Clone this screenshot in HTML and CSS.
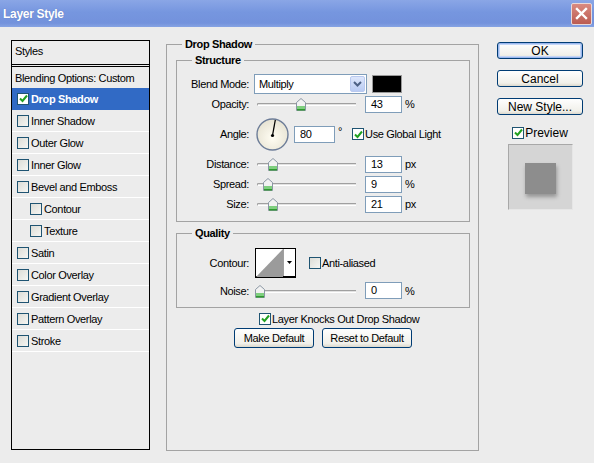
FILE: index.html
```html
<!DOCTYPE html>
<html>
<head>
  <title>Layer Style</title>
  <meta name="viewport" content="width=device-width, initial-scale=1">
  <link rel="stylesheet" href="styles.css">
</head>
<body>
  <div class="titlebar">
    <span class="title">Layer Style</span>
    <span class="close"><svg width="13" height="13" viewBox="0 0 13 13"><path d="M2 2 L11 11 M11 2 L2 11" stroke="#fff" stroke-width="2.4" stroke-linecap="square"/></svg></span>
  </div>

  <div class="main">
    <div class="styles-list">
      <div class="list-head">Styles</div>
      <div class="list-row plain">Blending Options: Custom</div>
      <div class="list-row selected"><span class="cb on"><svg width="9" height="9" viewBox="0 0 9 9"><path d="M1 4.5 L3.5 7 L8 1.5" stroke="#21a121" stroke-width="2" fill="none"/></svg></span>Drop Shadow</div>
      <div class="list-row"><span class="cb"></span>Inner Shadow</div>
      <div class="list-row"><span class="cb"></span>Outer Glow</div>
      <div class="list-row"><span class="cb"></span>Inner Glow</div>
      <div class="list-row"><span class="cb"></span>Bevel and Emboss</div>
      <div class="list-row sub"><span class="cb"></span>Contour</div>
      <div class="list-row sub"><span class="cb"></span>Texture</div>
      <div class="list-row"><span class="cb"></span>Satin</div>
      <div class="list-row"><span class="cb"></span>Color Overlay</div>
      <div class="list-row"><span class="cb"></span>Gradient Overlay</div>
      <div class="list-row"><span class="cb"></span>Pattern Overlay</div>
      <div class="list-row"><span class="cb"></span>Stroke</div>
    </div>

    <fieldset class="group outer">
      <legend>Drop Shadow</legend>

      <fieldset class="group structure">
        <legend>Structure</legend>
        <div class="row r-blend">
          <span class="lbl">Blend Mode:</span>
          <div class="select">Multiply<span class="sel-btn"><svg width="9" height="6" viewBox="0 0 9 6"><path d="M1 1 L4.5 4.5 L8 1" stroke="#4d6185" stroke-width="2" fill="none"/></svg></span></div>
          <span class="swatch"></span>
        </div>
        <div class="row r-slide r-opacity">
          <span class="lbl">Opacity:</span>
          <div class="slider"><span class="track"></span><svg class="thumb" style="left:42px" width="10" height="13" viewBox="0 0 10 13"><path d="M0.5 4.5 L5 0.5 L9.5 4.5 V12.5 H0.5 Z" fill="#f2f2f2" stroke="#8a96a3"/><rect x="1" y="8" width="8" height="4" fill="#7fcf7f"/><rect x="1" y="11" width="8" height="1.5" fill="#2e9a2e"/></svg></div>
          <span class="num">43</span><span class="unit">%</span>
        </div>
        <div class="row r-angle">
          <span class="lbl">Angle:</span>
          <svg class="dial" width="33" height="33" viewBox="0 0 33 33"><defs><radialGradient id="dg" cx="50%" cy="60%" r="60%"><stop offset="0" stop-color="#fffdf3"/><stop offset="1" stop-color="#e6e2d2"/></radialGradient></defs><circle cx="16.5" cy="16.5" r="15.5" fill="url(#dg)" stroke="#6d7d98" stroke-width="1.4"/><line x1="16.5" y1="17.5" x2="19.3" y2="2" stroke="#000" stroke-width="1.3"/><circle cx="16.5" cy="17.5" r="1.6" fill="#000"/></svg>
          <span class="num wide">80</span><span class="deg">°</span>
          <span class="check-item glob"><span class="cb on"><svg width="9" height="9" viewBox="0 0 9 9"><path d="M1 4.5 L3.5 7 L8 1.5" stroke="#21a121" stroke-width="2" fill="none"/></svg></span>Use Global Light</span>
        </div>
        <div class="row r-slide r-distance">
          <span class="lbl">Distance:</span>
          <div class="slider"><span class="track"></span><svg class="thumb" style="left:14px" width="10" height="13" viewBox="0 0 10 13"><path d="M0.5 4.5 L5 0.5 L9.5 4.5 V12.5 H0.5 Z" fill="#f2f2f2" stroke="#8a96a3"/><rect x="1" y="8" width="8" height="4" fill="#7fcf7f"/><rect x="1" y="11" width="8" height="1.5" fill="#2e9a2e"/></svg></div>
          <span class="num">13</span><span class="unit">px</span>
        </div>
        <div class="row r-slide r-spread">
          <span class="lbl">Spread:</span>
          <div class="slider"><span class="track"></span><svg class="thumb" style="left:9px" width="10" height="13" viewBox="0 0 10 13"><path d="M0.5 4.5 L5 0.5 L9.5 4.5 V12.5 H0.5 Z" fill="#f2f2f2" stroke="#8a96a3"/><rect x="1" y="8" width="8" height="4" fill="#7fcf7f"/><rect x="1" y="11" width="8" height="1.5" fill="#2e9a2e"/></svg></div>
          <span class="num">9</span><span class="unit">%</span>
        </div>
        <div class="row r-slide">
          <span class="lbl">Size:</span>
          <div class="slider"><span class="track"></span><svg class="thumb" style="left:14px" width="10" height="13" viewBox="0 0 10 13"><path d="M0.5 4.5 L5 0.5 L9.5 4.5 V12.5 H0.5 Z" fill="#f2f2f2" stroke="#8a96a3"/><rect x="1" y="8" width="8" height="4" fill="#7fcf7f"/><rect x="1" y="11" width="8" height="1.5" fill="#2e9a2e"/></svg></div>
          <span class="num">21</span><span class="unit">px</span>
        </div>
      </fieldset>

      <fieldset class="group quality">
        <legend>Quality</legend>
        <div class="row r-contour">
          <span class="lbl">Contour:</span>
          <div class="contour">
            <svg class="curve" width="27" height="28" viewBox="0 0 27 28"><polygon points="0,28 27,0 27,28" fill="#9b9b9b"/></svg>
            <span class="ct-btn"><svg width="5" height="3" viewBox="0 0 5 3"><polygon points="0,0 5,0 2.5,3" fill="#000"/></svg></span>
          </div>
          <span class="check-item aa"><span class="cb"></span>Anti-aliased</span>
        </div>
        <div class="row r-slide r-noise">
          <span class="lbl">Noise:</span>
          <div class="slider"><span class="track"></span><svg class="thumb" style="left:1px" width="10" height="13" viewBox="0 0 10 13"><path d="M0.5 4.5 L5 0.5 L9.5 4.5 V12.5 H0.5 Z" fill="#f2f2f2" stroke="#8a96a3"/><rect x="1" y="8" width="8" height="4" fill="#7fcf7f"/><rect x="1" y="11" width="8" height="1.5" fill="#2e9a2e"/></svg></div>
          <span class="num">0</span><span class="unit">%</span>
        </div>
      </fieldset>

      <div class="knock"><span class="check-item"><span class="cb on"><svg width="9" height="9" viewBox="0 0 9 9"><path d="M1 4.5 L3.5 7 L8 1.5" stroke="#21a121" stroke-width="2" fill="none"/></svg></span>Layer Knocks Out Drop Shadow</span></div>
      <div class="defaults">
        <span class="btn b-make">Make Default</span>
        <span class="btn b-reset">Reset to Default</span>
      </div>
    </fieldset>

    <div class="side">
      <span class="btn side-btn default">OK</span>
      <span class="btn side-btn">Cancel</span>
      <span class="btn side-btn">New Style...</span>
      <div class="preview-check"><span class="check-item"><span class="cb on"><svg width="9" height="9" viewBox="0 0 9 9"><path d="M1 4.5 L3.5 7 L8 1.5" stroke="#21a121" stroke-width="2" fill="none"/></svg></span>Preview</span></div>
      <div class="preview"><span class="swatch-square"></span></div>
    </div>
  </div>
</body>
</html>
```

FILE: styles.css
```css
body { margin:0; width:594px; height:463px; overflow:hidden; background:#ececec;
       font-family:'Liberation Sans', Arial, sans-serif; font-size:11px; letter-spacing:-0.35px; color:#000; }

.titlebar { height:27px; display:flex; align-items:center; justify-content:space-between;
            background:linear-gradient(#8aa6e6, #7696df 45%, #7392dc 85%, #86a3e3); padding:0 2px 0 3px; }
.title { color:#fff; font-weight:bold; font-size:12px; letter-spacing:-0.3px; text-shadow:0 0 1px #5a74b8; }
.close { width:19px; height:20px; border:1px solid #e8d8d8; border-radius:2px; display:flex;
         align-items:center; justify-content:center; background:linear-gradient(#d98a80, #bb5c52); }

.main { display:flex; align-items:flex-start; padding:13px 0 0 11px; }

/* left list */
.styles-list { width:139px; height:410px; box-sizing:border-box; border:1px solid #000; }
.list-head { line-height:21px; padding-left:3px; border-bottom:3px double #000; box-sizing:border-box; height:26px; }
.list-row { height:22px; box-sizing:border-box; border-bottom:1px solid #fff; display:flex;
            align-items:center; padding-left:5px; gap:2px; }
.list-row.plain { padding-left:3px; height:21px; border-bottom:none; }
.list-row.sub { padding-left:18px; }
.list-row.selected { background:#316ac5; color:#fff; font-weight:bold; border-bottom-color:#316ac5; }
.list-row.selected .cb { background:#fff; }

.cb { width:12px; height:12px; box-sizing:border-box; border:1px solid #1f5472;
      background:linear-gradient(135deg, #dcdcd6, #f6f6f3); display:inline-flex;
      align-items:center; justify-content:center; flex:none; }
.cb.on { background:#fff; }
.check-item { display:inline-flex; align-items:center; gap:1px; }

/* group boxes */
.group { margin:0; min-width:0; border:1px solid #a3a3a3; }
.group legend { font-weight:bold; line-height:13px; padding:0 3px; }
.outer { margin:-2px 0 0 16px; width:313px; height:413px; box-sizing:border-box; padding:3px 8px 0 9px; }
.outer > legend { margin-left:6px; }
.structure { padding:7px 0 8px 0; }
.structure legend, .quality legend { margin-left:15px; }
.quality { margin-top:5px; padding:8px 0 8px 0; }

.row { display:flex; align-items:center; }
.lbl { width:72px; margin-right:5px; text-align:right; flex:none; }
.r-blend { height:20px; margin-bottom:1px; }
.r-slide { height:18px; margin-bottom:2px; }
.r-opacity { margin-bottom:4px; }
.r-angle { height:34px; margin-bottom:4px; }
.r-slide:last-child { margin-bottom:0; }

.select { width:113px; height:20px; box-sizing:border-box; border:1px solid #7f9db9; background:#fff;
          display:flex; align-items:center; justify-content:space-between; padding:0 1px 0 4px; }
.sel-btn { width:15px; height:16px; border:1px solid #b9c9ef; border-radius:2px; box-sizing:border-box;
           background:linear-gradient(#dde6fb, #b9cbf3); display:flex; align-items:center; justify-content:center; }
.swatch { width:30px; height:18px; box-sizing:border-box; border:1px solid #9a9a9a; background:#000; margin-left:5px; }

.slider { position:relative; width:102px; height:18px; flex:none; }
.track { position:absolute; left:3px; top:8px; width:99px; height:3px; box-sizing:border-box;
         border-top:1px solid #a0a0a0; border-bottom:1px solid #fff; border-left:1px solid #a0a0a0;
         border-radius:2px 0 0 2px; background:#e2e2e2; }
.thumb { position:absolute; top:3px; }

.num { width:37px; height:17px; box-sizing:border-box; border:1px solid #7f9db9; background:#fff;
       padding-left:5px; line-height:15px; margin-left:9px; }
.num.wide { width:41px; margin-left:5px; }
.unit { margin-left:3px; }
.deg { margin-left:3px; position:relative; top:-3px; }
.dial { margin-left:2px; }
.glob { margin-left:10px; }

.r-contour { height:30px; }
.contour { margin-left:1px; width:41px; height:30px; box-sizing:border-box; border:1px solid #000;
           border-bottom-width:2px; background:#fff; display:flex; }
.curve { display:block; }
.ct-btn { flex:1; border-left:1px solid #a0a0a0; display:flex; align-items:center; justify-content:center; }
.aa { margin-left:13px; }
.r-noise { margin-top:4px; height:17px; }

.knock { margin-top:4px; padding-left:83px; height:13px; display:flex; align-items:center; }
.defaults { margin-top:3px; display:flex; justify-content:center; gap:8px; }

.btn { display:flex; align-items:center; justify-content:center; box-sizing:border-box;
       border:1px solid #003c74; border-radius:3px; background:linear-gradient(#fefefe, #f1f0ea 80%, #dcd8cc); }
.b-make { width:80px; height:20px; }
.b-reset { width:90px; height:20px; }

/* right column */
.side { margin:2px 0 0 18px; width:86px; display:flex; flex-direction:column; align-items:center; }
.side-btn { width:86px; height:17px; margin-bottom:11px; font-size:12px; letter-spacing:0; }
.side-btn.default { box-shadow:inset 0 0 0 1px #9ab7ee, inset 0 0 0 2px #c4d6f6; }
.preview-check { margin-top:0; height:13px; display:flex; align-items:center; font-size:12px; letter-spacing:0; }
.preview { margin-top:5px; width:65px; height:66px; box-sizing:border-box; background:#d5d5d5;
           border:1px solid; border-color:#a8a8a8 #e6e6e6 #e6e6e6 #a8a8a8; padding:18px 0 0 16px; }
.swatch-square { display:block; width:31px; height:31px; background:#8d8d8d; box-shadow:1px 3px 4px rgba(0,0,0,0.3); }
```
